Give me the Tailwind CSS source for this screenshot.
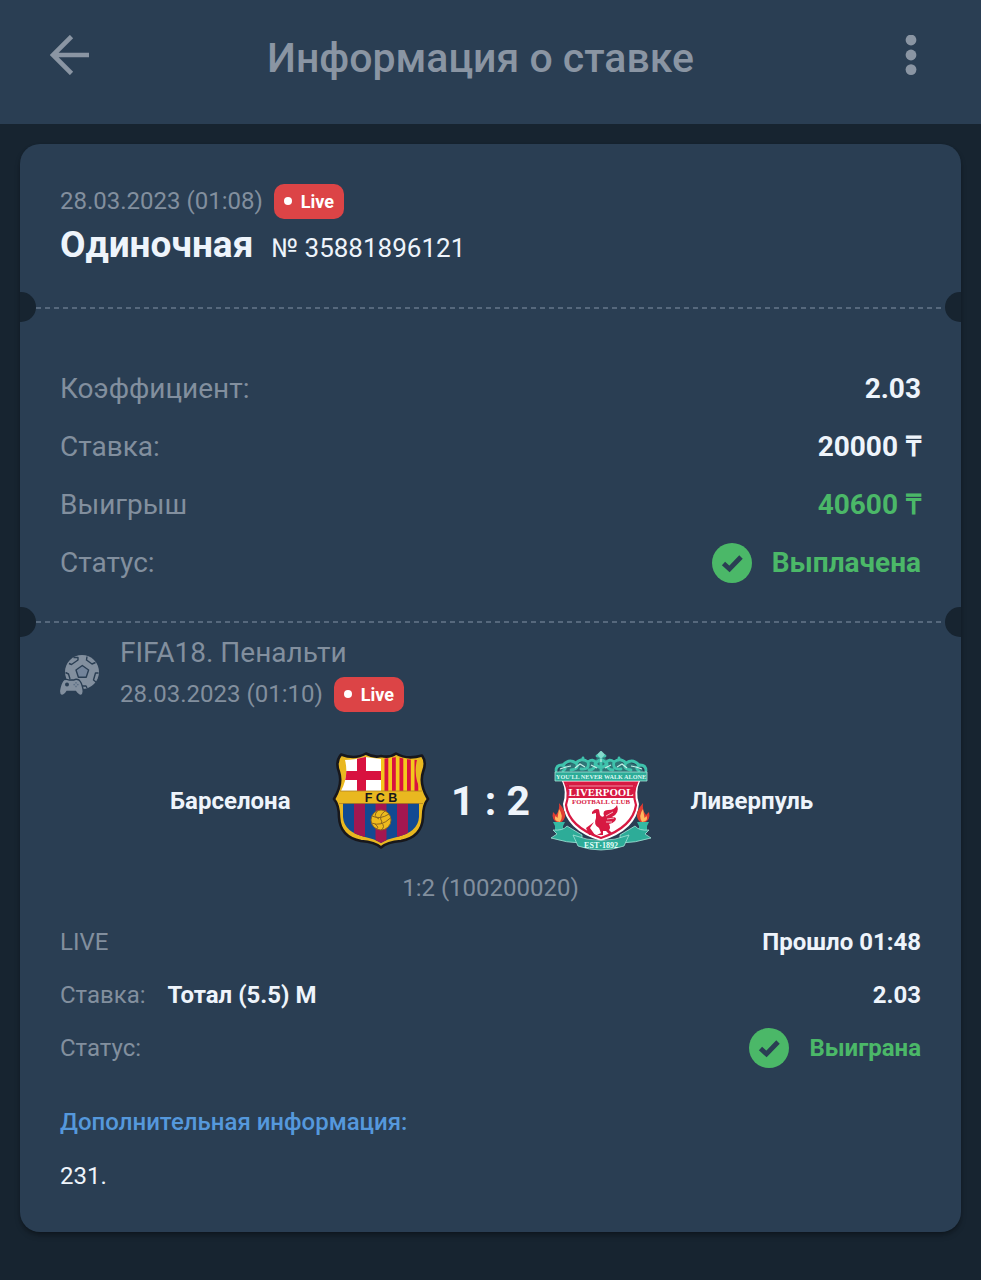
<!DOCTYPE html>
<html lang="ru">
<head>
    <meta charset="UTF-8">
    <meta name="viewport" content="width=device-width, initial-scale=1.0">
    <title>Информация о ставке</title>
    <script src="https://cdn.jsdelivr.net/npm/@tailwindcss/browser@4"></script>
</head>
<body class="min-h-screen bg-[#172430] font-[Roboto,sans-serif] text-[#eef4fb]">
    <header class="flex h-[124px] items-start justify-between bg-[#2a3e53] px-[50px] pt-[35px] text-[#8a95a3]">
        <button type="button" aria-label="Назад" class="size-10">
            <svg viewBox="0 0 40 40" class="size-10" fill="none" stroke="currentColor" stroke-width="4.6">
                <path d="M21.5 1.5 L3 20 L21.5 38.5 M3 20 H39"/>
            </svg>
        </button>
        <h1 class="mr-5 text-[41px] leading-[46px] font-medium">Информация о ставке</h1>
        <button type="button" aria-label="Меню" class="flex h-10 w-10 justify-center">
            <svg viewBox="0 0 12 40" class="h-10 w-3" fill="currentColor">
                <circle cx="6" cy="5" r="5.4"/>
                <circle cx="6" cy="20" r="5.4"/>
                <circle cx="6" cy="34.6" r="5.4"/>
            </svg>
        </button>
    </header>

    <main class="p-5 pb-12">
        <article class="overflow-hidden rounded-[20px] bg-[#2a3e53] shadow-md shadow-black/30">
            <section class="px-10 pt-[39px] pb-10">
                <div class="flex h-9 items-center gap-[11px]">
                    <time class="text-[24px] text-[#828f9e]">28.03.2023 (01:08)</time>
                    <span class="flex h-[35px] items-center gap-[9px] rounded-[10px] bg-[#dc4446] px-[10px] text-[18px] font-bold text-white"><i class="size-2 rounded-full bg-white"></i>Live</span>
                </div>
                <div class="flex h-12 items-baseline gap-[18px]">
                    <h2 class="text-[37px] leading-[52px] font-bold">Одиночная</h2>
                    <span class="text-[26px]">№ 35881896121</span>
                </div>
            </section>

            <div class="relative h-0">
                <svg class="absolute inset-x-4 top-0 h-[2px] w-[calc(100%-32px)]"><line x1="0" y1="1" x2="100%" y2="1" stroke="#56687c" stroke-width="2" stroke-dasharray="5 4"/></svg>
                <i class="absolute -top-[15px] -left-[14px] size-[30px] rounded-full bg-[#172430]"></i>
                <i class="absolute -top-[15px] -right-[14px] size-[30px] rounded-full bg-[#172430]"></i>
            </div>

            <section class="px-10 pt-[53px] pb-[30px] text-[28px]">
                <dl>
                    <div class="flex h-[58px] items-center justify-between">
                        <dt class="text-[#828f9e]">Коэффициент:</dt>
                        <dd class="font-bold">2.03</dd>
                    </div>
                    <div class="flex h-[58px] items-center justify-between">
                        <dt class="text-[#828f9e]">Ставка:</dt>
                        <dd class="flex gap-2 font-bold"><span>20000</span><span>₸</span></dd>
                    </div>
                    <div class="flex h-[58px] items-center justify-between">
                        <dt class="text-[#828f9e]">Выигрыш</dt>
                        <dd class="flex gap-2 font-bold text-[#4bb868]"><span>40600</span><span>₸</span></dd>
                    </div>
                    <div class="flex h-[58px] items-center justify-between">
                        <dt class="text-[#828f9e]">Статус:</dt>
                        <dd class="flex items-center gap-5 font-bold text-[#4bb868]">
                            <svg viewBox="0 0 40 40" class="size-10"><circle cx="20" cy="20" r="20" fill="#4bb868"/><path d="M11.5 20.5 L17.5 26 L29 14" fill="none" stroke="#2a3e53" stroke-width="4.8"/></svg>
                            Выплачена
                        </dd>
                    </div>
                </dl>
            </section>

            <div class="relative h-0">
                <svg class="absolute inset-x-4 -top-px h-[2px] w-[calc(100%-32px)]"><line x1="0" y1="1" x2="100%" y2="1" stroke="#56687c" stroke-width="2" stroke-dasharray="5 4"/></svg>
                <i class="absolute -top-[15px] -left-[14px] size-[30px] rounded-full bg-[#172430]"></i>
                <i class="absolute -top-[15px] -right-[14px] size-[30px] rounded-full bg-[#172430]"></i>
            </div>

            <section class="px-10 pt-[10px] pb-[29px] text-[24px]">
                <div class="flex items-center gap-5">
                    <!-- football with gamepad -->
                    <svg viewBox="0 0 40 41" class="mt-1 h-[41px] w-10" fill="#828f9e">
                        <circle cx="22" cy="17" r="17"/>
                        <g fill="none" stroke="#2a3e53" stroke-width="1.4" stroke-linejoin="round">
                            <path d="M22.300 10.500 L28.600 15 L26.200 22.300 H18.400 L16 15 Z" fill="#73849a"/>
                            <path d="M13.500 2.500 L18 2.500 L18 5 L11.500 9.500 L9 8.500 M27 1.500 L26.500 5 L32 9 L35.500 7.500 M38.500 18 L35.500 18 L33.500 25 L36 27 M5.500 17.500 L8.500 19 L10 24 M27 33 L26 31 L22 31"/>
                        </g>
                        <path d="M4 24.500 Q7.500 24 9 25 H14 Q16 23.500 19 25 Q21.500 27 23 34 Q24 39.500 21 40.500 Q19 41 15.500 36.500 H7 Q4 41 1.500 40.500 Q-1 39.500 -.500 35 Q1 27 4 24.500 Z" stroke="#2a3e53" stroke-width="1.4"/>
                        <circle cx="7" cy="29.500" r="2" fill="#2a3e53"/>
                        <g fill="#5f7186"><circle cx="16" cy="27.800" r=".9"/><circle cx="16" cy="31.400" r=".9"/><circle cx="14.200" cy="29.600" r=".9"/><circle cx="17.800" cy="29.600" r=".9"/></g>
                    </svg>
                    <div>
                        <h3 class="text-[28px] leading-[42px] text-[#828f9e]">FIFA18. Пенальти</h3>
                        <div class="flex h-10 items-center gap-[11px]">
                            <time class="text-[#828f9e]">28.03.2023 (01:10)</time>
                            <span class="flex h-[35px] items-center gap-[9px] rounded-[10px] bg-[#dc4446] px-[10px] text-[18px] font-bold text-white"><i class="size-2 rounded-full bg-white"></i>Live</span>
                        </div>
                    </div>
                </div>

                <div class="mt-[37px] flex items-center">
                    <span class="flex-1 pr-10 text-right font-bold">Барселона</span>
                    <svg viewBox="0 0 100 100" class="size-[100px]" role="img" aria-label="Барселона">
                        <defs>
                            <clipPath id="fcbTop"><path d="M14 9 Q23 9 34 6 L50 8 L66 6 Q77 9 86 9 Q82 25 90 40 H10 Q18 25 14 9 Z"/></clipPath>
                            <clipPath id="fcbBottom"><path d="M12 52 H88 V66 Q87 81 66 86 Q56 88 50 92 Q44 88 34 86 Q13 81 12 66 Z"/></clipPath>
                        </defs>
                        <path d="M10 3.500 Q24 9 35 2.500 Q43 7 50 5 Q59 7 65 2.500 Q76 9 91 4.500 Q96 11 92 21 Q88 33 97 48 Q92 54 92 66 Q91 86 70 90 Q56 91 50 96.500 Q44 91 30 90 Q9 86 8 66 Q8 54 3 48 Q12 33 8 21 Q4 11 10 3.500 Z" fill="#e9b820" stroke="#17171c" stroke-width="2.600" stroke-linejoin="round"/>
                        <g clip-path="url(#fcbTop)">
                            <path d="M8 3 H50 V40 H8 Z" fill="#fff"/>
                            <path d="M26 3 H35 V40 H26 Z M8 20 H50 V29 H8 Z" fill="#d8123f"/>
                            <path d="M50 3 H92 V40 H50 Z" fill="#f4c81d"/>
                            <path d="M53.500 3 h3.800 v37 h-3.800 Z M61 3 h3.800 v37 h-3.800 Z M68.500 3 h3.800 v37 h-3.800 Z M76 3 h3.800 v37 h-3.800 Z M83.500 3 h3.800 v37 h-3.800 Z" fill="#d8123f"/>
                        </g>
                        <g clip-path="url(#fcbBottom)">
                            <path d="M8 50 H92 V97 H8 Z" fill="#124a92"/>
                            <path d="M23 50 h11 v49 h-11 Z M44.500 50 h11 v49 h-11 Z M66 50 h11 v49 h-11 Z" fill="#a31750"/>
                        </g>
                        <path d="M9 40 H91 M8 52.500 H92" stroke="#af8221" stroke-width=".8"/>
                        <text x="50" y="51" text-anchor="middle" font-family="Liberation Sans" font-weight="700" font-size="12.500" fill="#17171c">F C B</text>
                        <circle cx="50" cy="69" r="10" fill="#edbb1d" stroke="#8a651f" stroke-width=".9"/>
                        <path d="M41 65 Q49 69 58 63 M40.500 72 Q50 76 59.500 67 M47 59.500 Q41 65 48 68 M54 60 Q47 65 51 71 M50 71 Q55 76 50 79 M44 73 Q49 77 45 78" fill="none" stroke="#8a651f" stroke-width="1"/>
                    </svg>
                    <strong class="w-[120px] text-center text-[41px] leading-[60px]">1 : 2</strong>
                    <svg viewBox="0 0 100 100" class="size-[100px]" role="img" aria-label="Ливерпуль">
                        <!-- gates -->
                        <path d="M8 21 Q8 15 14 15 Q20 11 28 12 Q37 8 43 10 L50 3 L57 10 Q63 8 72 12 Q80 11 86 15 Q92 15 92 21 Z" fill="#35b9a3" opacity=".45"/>
                        <g fill="none" stroke="#3fc2ac" stroke-width="2.800" stroke-linecap="round">
                            <path d="M5 20 Q5 14 11 14 Q17 17 12 20 M12 14 Q18 7 25 12 Q29 18 20 19 M25 12 Q31 6 37 11 Q39 19 30 18 M37 11 Q42 7 45 12 Q44 19 38 19 M95 20 Q95 14 89 14 Q83 17 88 20 M88 14 Q82 7 75 12 Q71 18 80 19 M75 12 Q69 6 63 11 Q61 19 70 18 M63 11 Q58 7 55 12 Q56 19 62 19"/>
                            <path d="M50 3 V20 M46 5 H54 M44 13 Q50 5 56 13 Q50 20 44 13 M32 9 V7 M68 9 V7"/>
                        </g>
                        <path d="M9 18 L15 16 L20 15 M24 17 L29 13 L34 16 M40 14 L46 17 M50 8 V11 M54 17 L60 14 M66 16 L71 13 L76 17 M80 15 L85 16 L91 18" fill="none" stroke="#c4efe7" stroke-width="1.200"/>
                        <path d="M50 -.5 L54 3.500 L50 8 L46 3.500 Z" fill="#83dacb"/>
                        <path d="M4 21 H96 V30 H4 Z" fill="#2dac98" stroke="#a5e2d7" stroke-width=".8"/>
                        <text x="50" y="28" text-anchor="middle" font-family="Liberation Serif" font-weight="700" font-size="6.200" fill="#dcf8f2">YOU'LL NEVER WALK ALONE</text>
                        <!-- shield -->
                        <path d="M11 30 H89 Q84 41 88 53 Q86 79 50 90 Q14 79 12 53 Q16 41 11 30 Z" fill="#fff"/>
                        <path d="M14 31.500 H86 Q81 42 85 54 Q82 76 50 87 Q18 76 15 54 Q19 42 14 31.500 Z" fill="#fff" stroke="#d71942" stroke-width="2.200"/>
                        <path d="M15 32 H85 Q82 39 83 47 H17 Q18 39 15 32 Z" fill="#d71942"/>
                        <path d="M18 35 H82" stroke="#f1a8b6" stroke-width=".8"/>
                        <text x="50" y="45.300" text-anchor="middle" font-family="Liberation Serif" font-weight="700" font-size="10.800" fill="#fff">LIVERPOOL</text>
                        <text x="50" y="53" text-anchor="middle" font-family="Liberation Serif" font-weight="700" font-size="6.800" fill="#d71942">FOOTBALL CLUB</text>
                        <!-- liver bird -->
                        <path d="M41 61 Q44 57 48 58.500 L49 64 Q51 67 53 65 Q51 59 57 59 Q64 59 66 54 Q69 62 61 66 Q67 66 64 70 Q61 73 58 73 Q60 77 58 79 L62 83 H58 L55 80 L52 80 L52 84 H46 L50 82 L48 77 Q42 74 45 67 L45 62 L41 63 Z M43 71 L39 77 L44 84 H38 L35 77 Z" fill="#d71942"/>
                        <path d="M55 65 L62 61 M56 68 L63 67 M55 71 L61 71" stroke="#fff" stroke-width=".7"/>
                        <!-- torches -->
                        <path d="M8 52 Q15 60 14 66 Q12 72 7 72 Q0 69 2 61 L5 64 Q9 59 8 52 Z M92 52 Q85 60 86 66 Q88 72 93 72 Q100 69 98 61 L95 64 Q91 59 92 52 Z" fill="#df3c32"/>
                        <path d="M8 58 Q13 65 9 71 Q2 70 4.500 65 L6.500 67 Z M92 58 Q87 65 91 71 Q98 70 95.500 65 L93.500 67 Z" fill="#ffb95e"/>
                        <path d="M2 71 H14 L12 75 V82 H4 V75 Z M86 71 H98 L96 75 V82 H88 V75 Z" fill="#35b9a3"/>
                        <!-- ribbon -->
                        <path d="M0 87 L6 83 L2 79 Q12 80 16 75 L31 84 L31 92 Q16 92 0 87 Z M100 87 L94 83 L98 79 Q88 80 84 75 L69 84 L69 92 Q84 92 100 87 Z" fill="#2dac98" stroke="#a5e2d7" stroke-width=".8"/>
                        <path d="M22 84 Q50 95 78 84 L73 95 Q50 103 27 95 Z" fill="#2dac98" stroke="#a5e2d7" stroke-width=".8"/>
                        <text x="50" y="97" text-anchor="middle" font-family="Liberation Serif" font-weight="700" font-size="8" fill="#e5fff9">EST·1892</text>
                    </svg>
                    <span class="flex-1 pl-10 font-bold">Ливерпуль</span>
                </div>

                <p class="mt-[10px] h-[54px] text-center leading-[54px] text-[#828f9e]">1:2 (100200020)</p>

                <dl>
                    <div class="flex h-[53px] items-center justify-between">
                        <dt class="text-[#828f9e]">LIVE</dt>
                        <dd class="font-bold">Прошло 01:48</dd>
                    </div>
                    <div class="flex h-[53px] items-center">
                        <dt class="text-[#828f9e]">Ставка:</dt>
                        <dd class="ml-[22px] font-bold">Тотал (5.5) М</dd>
                        <dd class="ml-auto font-bold">2.03</dd>
                    </div>
                    <div class="flex h-[53px] items-center justify-between">
                        <dt class="text-[#828f9e]">Статус:</dt>
                        <dd class="flex items-center gap-5 font-bold text-[#4bb868]">
                            <svg viewBox="0 0 40 40" class="size-10"><circle cx="20" cy="20" r="20" fill="#4bb868"/><path d="M11.5 20.5 L17.5 26 L29 14" fill="none" stroke="#2a3e53" stroke-width="4.8"/></svg>
                            Выиграна
                        </dd>
                    </div>
                </dl>

                <h4 class="mt-[21px] leading-[54px] font-medium text-[#5598dc]">Дополнительная информация:</h4>
                <p class="leading-[54px]">231.</p>
            </section>
        </article>
    </main>
</body>
</html>
